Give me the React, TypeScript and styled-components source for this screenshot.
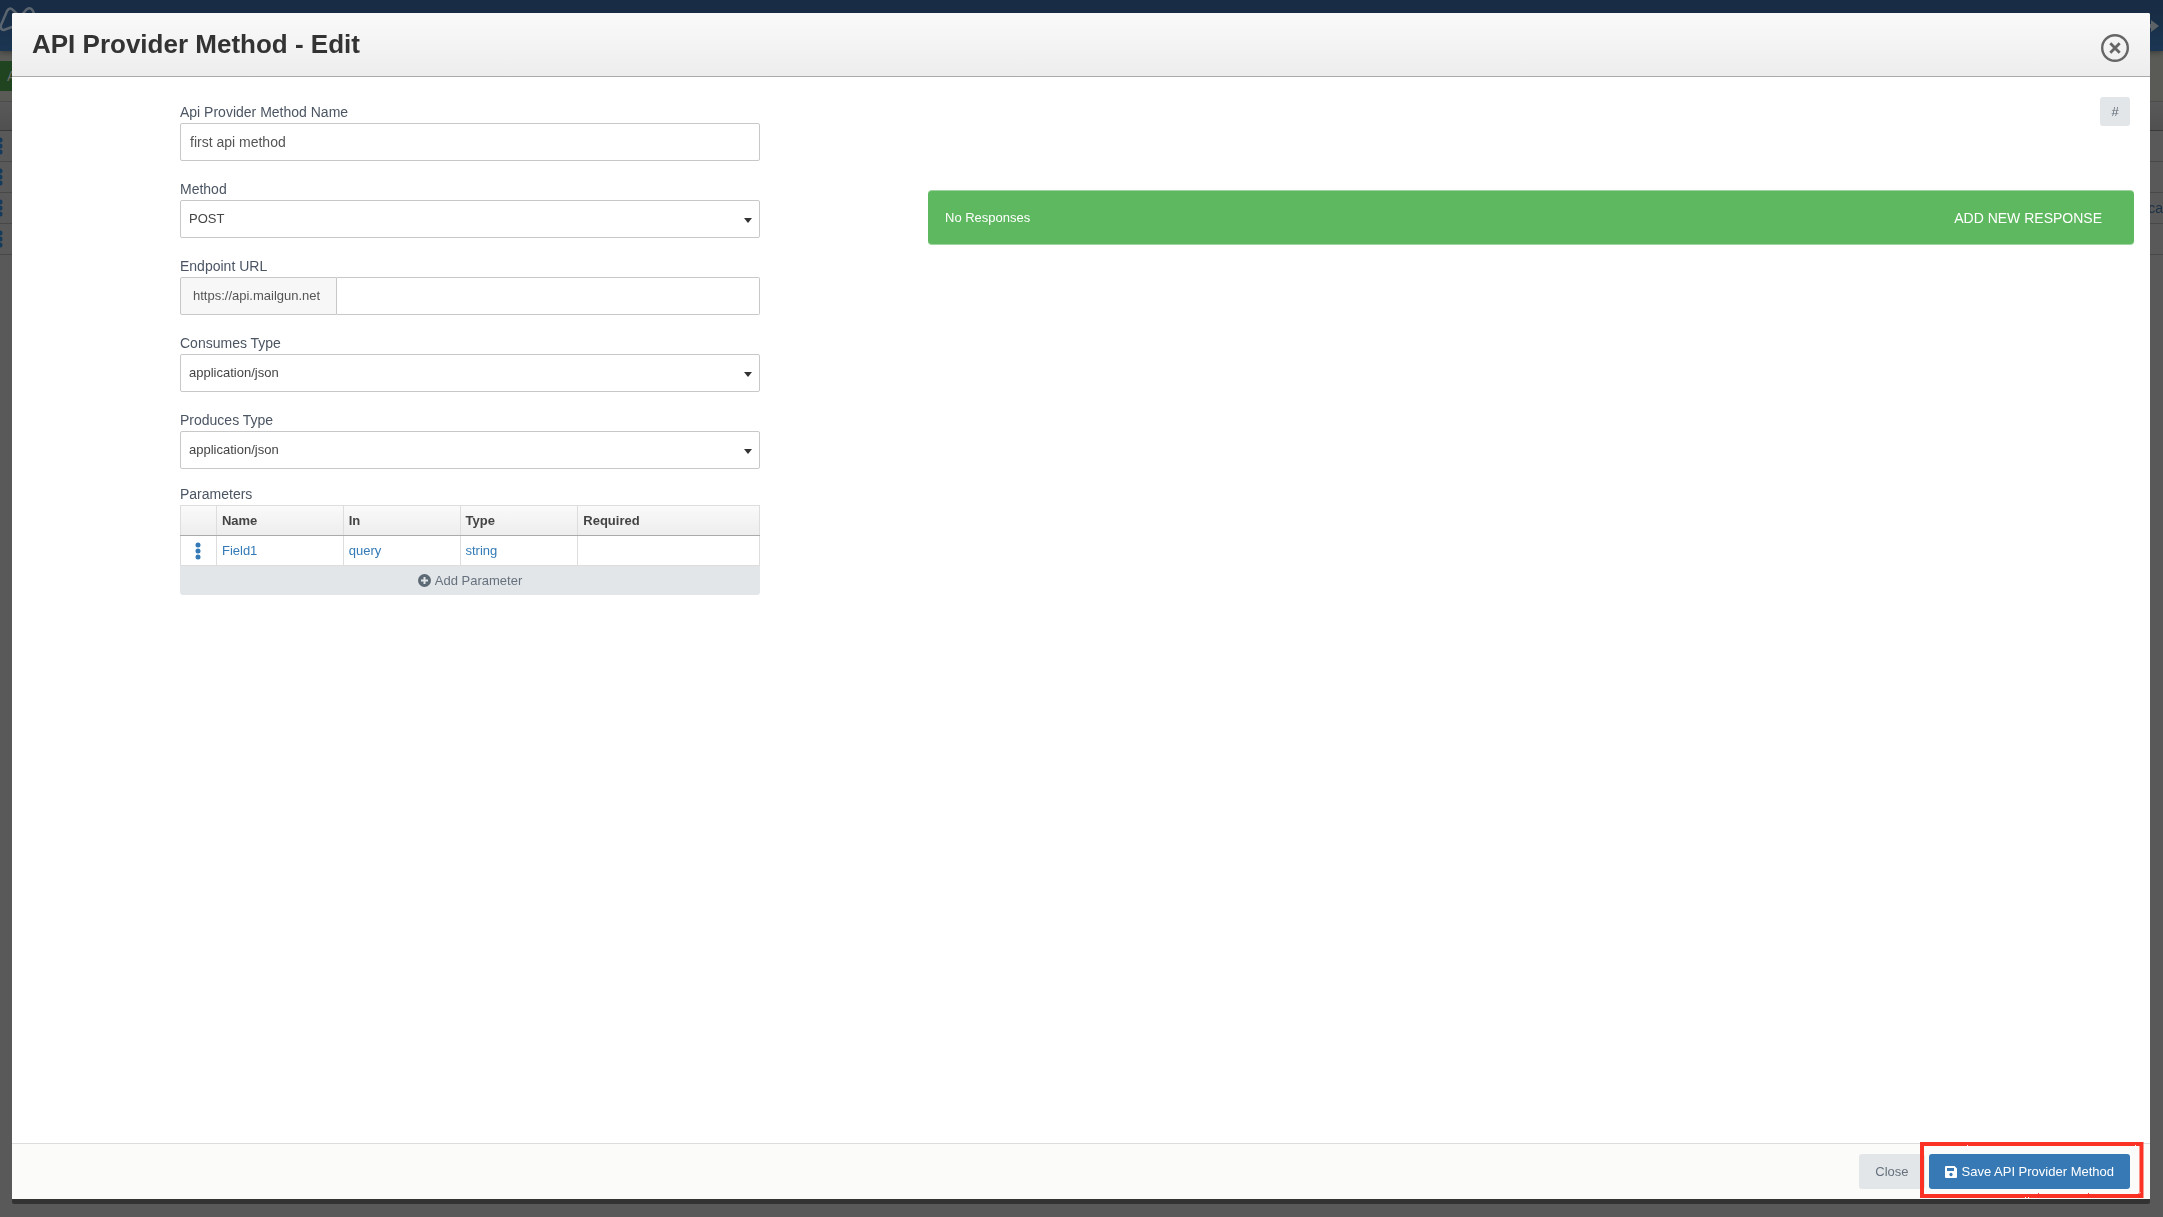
import React from "react";
import styled, { createGlobalStyle } from "styled-components";

const GlobalStyle = createGlobalStyle`
  *, *::before, *::after { box-sizing: border-box; }
  html, body, #root { height: 100%; }
  body {
    margin: 0;
    background: #595959;
    color: #444;
    font: 13px/20px "Liberation Sans", Arial, sans-serif;
    overflow: hidden;
  }
  button, input, select { font: inherit; margin: 0; }
`;

const Backdrop = styled.div`
  position: fixed;
  inset: 0;
  display: flex;
  flex-direction: column;
  background: #595959;
`;

const NavBar = styled.div`
  display: flex;
  flex: none;
  align-items: center;
  justify-content: space-between;
  height: 51px;
  background: linear-gradient(#182d45 13px, #1b3653);
  box-shadow: 0 1px 6px rgba(0, 0, 0, 0.4);
  z-index: 1;
`;

const BackLogo = styled.svg`
  width: 38px;
  height: 30px;
  margin-bottom: 16px;
`;

const BackArrow = styled.svg`
  width: 14px;
  height: 14px;
  margin-right: 4px;
`;

const ActionStrip = styled.div`
  flex: none;
  height: 51px;
  padding: 10px 0;
  background: #5a5a57;
  border-bottom: 1px solid #4c4c4c;
`;

const BackTab = styled.div`
  width: 60px;
  height: 30px;
  padding: 5px 7px;
  background: #1f441f;
  color: #6b6b6b;
  font-size: 14px;
`;

const BackHead = styled.div`
  flex: none;
  height: 29px;
  background: linear-gradient(#595959, #505050);
  border-bottom: 1px solid #3a3a3a;
`;

const BackRow = styled.div`
  display: flex;
  flex: none;
  align-items: center;
  justify-content: space-between;
  height: 31px;
  color: #1b2f45;
  font-size: 14px;
  border-bottom: 1px solid #484848;
`;

const BackDots = styled.svg`
  width: 4px;
  height: 18px;
`;

const Modal = styled.div`
  position: fixed;
  inset: 13px 13px 18px 12px;
  z-index: 2;
  display: flex;
  flex-direction: column;
  background: #fff;
  border-radius: 2px;
  box-shadow: 0 5px 0 #333;
`;

const Header = styled.header`
  display: flex;
  flex: none;
  align-items: flex-start;
  justify-content: space-between;
  height: 64px;
  padding: 0 20px;
  background: linear-gradient(#fafafa, #ededed);
  border-bottom: 1px solid #aaa;
  border-radius: 2px 2px 0 0;
`;

const Title = styled.h1`
  margin: 0;
  color: #333;
  font-size: 26px;
  line-height: 62px;
`;

const CloseIconButton = styled.button`
  display: flex;
  margin-top: 20px;
  padding: 0;
  background: none;
  border: 0;
  cursor: pointer;
`;

const Body = styled.main`
  display: grid;
  flex: 1;
  grid-template-columns: 168fr 580fr 168fr 1206fr 16px;
  align-items: start;
  padding-top: 20px;
`;

const Form = styled.form`
  display: flex;
  flex-direction: column;
  grid-column: 2;
  gap: 15px;
  padding-top: 2px;
`;

const Field = styled.div`
  display: flex;
  flex-direction: column;
  padding-top: 3px;
`;

const Label = styled.label`
  padding-bottom: 1px;
  color: #4b5563;
  font-size: 14px;
  line-height: 20px;
`;

const TextInput = styled.input`
  width: 100%;
  min-width: 0;
  height: 38px;
  padding: 0 9px;
  background: #fff;
  border: 1px solid #c8c8c8;
  border-radius: 2px;
  color: #555;
  font-size: 14px;
  outline: 0;
`;

const SelectBox = styled.select`
  width: 100%;
  height: 38px;
  padding: 0 24px 0 8px;
  appearance: none;
  background: #fff
    url("data:image/svg+xml,%3Csvg xmlns='http://www.w3.org/2000/svg' width='8' height='5'%3E%3Cpath d='M0 0h8L4 5z' fill='%23333'/%3E%3C/svg%3E")
    no-repeat right 7px top 17px;
  border: 1px solid #c8c8c8;
  border-radius: 2px;
  color: #444;
  font-size: 13px;
`;

const InputGroup = styled.div`
  display: flex;

  ${TextInput} {
    border-left: 0;
    border-radius: 0 2px 2px 0;
  }
`;

const Prefix = styled.span`
  flex: none;
  min-width: 157px;
  padding: 0 12px;
  background: #f7f7f7;
  border: 1px solid #c8c8c8;
  border-radius: 2px 0 0 2px;
  color: #555;
  line-height: 36px;
`;

const Parameters = styled.section`
  display: flex;
  flex-direction: column;
`;

const SectionLabel = styled.h2`
  margin: 0;
  padding-bottom: 1px;
  color: #4b5563;
  font-size: 14px;
  font-weight: 400;
  line-height: 20px;
`;

const Table = styled.table`
  width: 100%;
  table-layout: fixed;
  border-collapse: collapse;

  th, td {
    height: 30px;
    padding: 0 5px;
    border: 1px solid #ddd;
    text-align: left;
  }
  thead tr { background: linear-gradient(#fafafa, #ededed); }
  th { border-bottom-color: #aaa; }
`;

const Col = styled.col<{ $share: number }>`
  width: calc(100% * ${(p) => p.$share} / 580);
`;

const CellLink = styled.a`
  color: #337ab7;
  text-decoration: none;
`;

const DotsButton = styled.button`
  display: flex;
  margin: 0 auto;
  padding: 0;
  background: none;
  border: 0;
`;

const AddParameter = styled.button`
  display: flex;
  align-items: center;
  justify-content: center;
  gap: 4px;
  height: 29px;
  padding: 0;
  background: #e2e6e9;
  border: 0;
  border-radius: 0 0 3px 3px;
  color: #66717d;
`;

const Responses = styled.section`
  display: flex;
  flex-direction: column;
  grid-column: 4;
`;

const HashButton = styled.button`
  align-self: flex-end;
  width: 30px;
  height: 29px;
  margin: 0 4px 64px 0;
  padding: 0;
  background: #e2e6e9;
  border: 0;
  border-radius: 3px;
  color: #5d6975;
  font-size: 13px;
`;

const ResponseBar = styled.div`
  display: flex;
  align-items: center;
  justify-content: space-between;
  height: 55px;
  padding: 0 32px 0 17px;
  background: #5eb860;
  border: 1px solid #9fd4a0;
  border-width: 1px 0;
  border-radius: 4px;
  color: #fff;
`;

const AddResponse = styled.button`
  padding: 0;
  background: none;
  border: 0;
  color: #fff;
  font-size: 14px;
`;

const Footer = styled.footer`
  display: flex;
  flex: none;
  align-items: center;
  justify-content: flex-end;
  gap: 4px;
  height: 56px;
  padding: 0 20px;
  background: #fbfbf9;
  border-top: 1px solid #ddd;
`;

const FooterButton = styled.button<{ $primary?: boolean }>`
  display: flex;
  align-items: center;
  gap: 5px;
  height: 35px;
  padding: 0 16px;
  background: ${(p) => (p.$primary ? "#3679b5" : "#e2e6e9")};
  border: 0;
  border-radius: 3px;
  color: ${(p) => (p.$primary ? "#fff" : "#66717d")};
`;

const Highlighted = styled.div`
  position: relative;
`;

const Marker = styled.svg`
  position: absolute;
  top: -12px;
  left: -9px;
  width: calc(100% + 22px);
  height: calc(100% + 21px);
  overflow: visible;
  pointer-events: none;
`;

const Dots = () => (
  <svg width="6" height="18" viewBox="0 0 6 18" fill="#337ab7" aria-hidden="true">
    <circle cx="3" cy="3" r="2.5" />
    <circle cx="3" cy="9" r="2.5" />
    <circle cx="3" cy="15" r="2.5" />
  </svg>
);

const selects = [
  { id: "consumes", label: "Consumes Type", value: "application/json" },
  { id: "produces", label: "Produces Type", value: "application/json" },
];

function SelectField({ id, label, value }: { id: string; label: string; value: string }) {
  return (
    <Field>
      <Label htmlFor={id}>{label}</Label>
      <SelectBox id={id} defaultValue={value}>
        <option>{value}</option>
      </SelectBox>
    </Field>
  );
}

export default function App() {
  return (
    <>
      <GlobalStyle />
      <Backdrop aria-hidden="true">
        <NavBar>
          <BackLogo viewBox="0 0 38 30" fill="none" stroke="#5b6570" strokeWidth="2.5">
            <path d="M20 21 L4 27 Q0 27 1 22 L7 8 Q10 3 14 8 L20 14 L26 7 Q30 3 33 8 L37 18" />
          </BackLogo>
          <BackArrow viewBox="0 0 14 14" fill="#5d6266">
            <path d="M0 5h6V1l8 6-8 6V9H0z" />
          </BackArrow>
        </NavBar>
        <ActionStrip>
          <BackTab>A</BackTab>
        </ActionStrip>
        <BackHead />
        {["", "", "ca", ""].map((text, i) => (
          <BackRow key={i}>
            <BackDots viewBox="0 0 4 18" fill="#143a5c">
              <circle cx="0" cy="3" r="2.5" />
              <circle cx="0" cy="9" r="2.5" />
              <circle cx="0" cy="15" r="2.5" />
            </BackDots>
            <span>{text}</span>
          </BackRow>
        ))}
      </Backdrop>
      <Modal role="dialog" aria-labelledby="title">
        <Header>
          <Title id="title">API Provider Method - Edit</Title>
          <CloseIconButton aria-label="Close dialog">
            <svg width="30" height="30" viewBox="0 0 30 30" fill="none" stroke="#666">
              <circle cx="15" cy="15" r="12.8" strokeWidth="2.4" />
              <path d="M11.300 11.300l7.400 7.400M18.700 11.300l-7.400 7.400" strokeWidth="2.8" strokeLinecap="square" />
            </svg>
          </CloseIconButton>
        </Header>
        <Body>
          <Form>
            <Field>
              <Label htmlFor="name">Api Provider Method Name</Label>
              <TextInput id="name" defaultValue="first api method" />
            </Field>
            <SelectField id="method" label="Method" value="POST" />
            <Field>
              <Label htmlFor="url">Endpoint URL</Label>
              <InputGroup>
                <Prefix>https://api.mailgun.net</Prefix>
                <TextInput id="url" />
              </InputGroup>
            </Field>
            {selects.map((s) => (
              <SelectField key={s.id} {...s} />
            ))}
            <Parameters>
              <SectionLabel>Parameters</SectionLabel>
              <Table>
                <colgroup>
                  <Col $share={36} />
                  <Col $share={127} />
                  <Col $share={117} />
                  <Col $share={118} />
                  <Col $share={182} />
                </colgroup>
                <thead>
                  <tr>
                    <th aria-label="Actions" />
                    <th>Name</th>
                    <th>In</th>
                    <th>Type</th>
                    <th>Required</th>
                  </tr>
                </thead>
                <tbody>
                  <tr>
                    <td>
                      <DotsButton type="button" aria-label="Row menu">
                        <Dots />
                      </DotsButton>
                    </td>
                    <td><CellLink href="#">Field1</CellLink></td>
                    <td><CellLink href="#">query</CellLink></td>
                    <td><CellLink href="#">string</CellLink></td>
                    <td />
                  </tr>
                </tbody>
              </Table>
              <AddParameter type="button">
                <svg width="13" height="13" viewBox="0 0 13 13" aria-hidden="true">
                  <circle cx="6.5" cy="6.5" r="6.5" fill="#5d6975" />
                  <path d="M6.5 3v7M3 6.5h7" stroke="#e2e6e9" strokeWidth="2" />
                </svg>
                Add Parameter
              </AddParameter>
            </Parameters>
          </Form>
          <Responses>
            <HashButton>#</HashButton>
            <ResponseBar>
              <span>No Responses</span>
              <AddResponse>ADD NEW RESPONSE</AddResponse>
            </ResponseBar>
          </Responses>
        </Body>
        <Footer>
          <FooterButton>Close</FooterButton>
          <Highlighted>
            <FooterButton $primary>
              <svg width="12" height="12" viewBox="0 0 12 12" aria-hidden="true">
                <path fill="#fff" fillRule="evenodd" d="M1 0h8.500L12 2.500V11a1 1 0 0 1-1 1H1a1 1 0 0 1-1-1V1a1 1 0 0 1 1-1zM2 2v3h7V2zM6 6.800a1.700 1.700 0 1 0 .01 0z" />
              </svg>
              Save API Provider Method
            </FooterButton>
            <Marker aria-hidden="true">
              <filter id="rough" x="-5%" y="-15%" width="110%" height="130%" colorInterpolationFilters="sRGB">
                <feTurbulence type="fractalNoise" baseFrequency="0.6" numOctaves="1" seed="4" />
                <feDisplacementMap in="SourceGraphic" scale="2" xChannelSelector="R" yChannelSelector="G" />
              </filter>
              <rect x="2" y="2" width="calc(100% - 4px)" height="calc(100% - 4px)" fill="none" stroke="#fb3223" strokeWidth="4" filter="url(#rough)" />
            </Marker>
          </Highlighted>
        </Footer>
      </Modal>
    </>
  );
}
